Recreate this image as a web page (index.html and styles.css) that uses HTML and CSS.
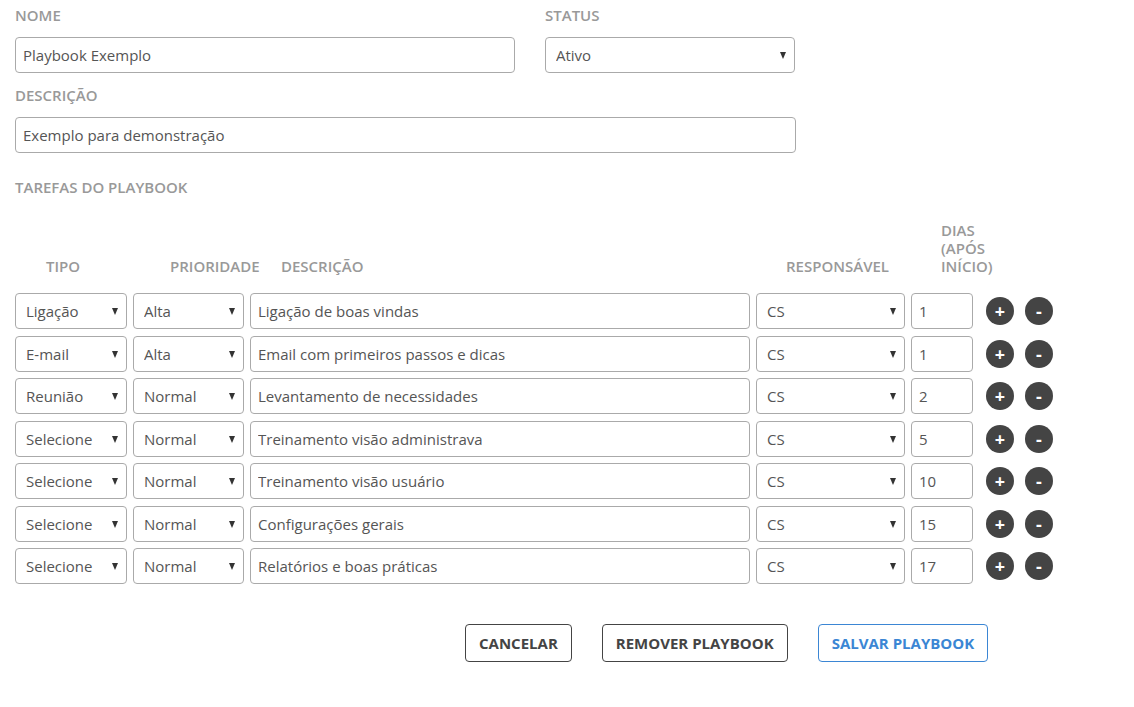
FILE: index.html
```html
<!DOCTYPE html>
<html lang="pt-BR">
<head>
    <meta charset="UTF-8">
    <title>Playbook</title>
    <link rel="stylesheet" href="styles.css">
</head>
<body>

<div class="playbook-form">
    <div class="top-row">
        <div class="field field-nome">
            <label>NOME</label>
            <input type="text" class="input" value="Playbook Exemplo">
        </div>
        <div class="field field-status">
            <label>STATUS</label>
            <div class="select-wrap">
                <select class="input"><option>Ativo</option></select>
            </div>
        </div>
    </div>
    <div class="field field-desc">
        <label>DESCRIÇÃO</label>
        <input type="text" class="input" value="Exemplo para demonstração">
    </div>

    <h3 class="section-title">TAREFAS DO PLAYBOOK</h3>

    <div class="tasks">
        <div class="task-head">
            <div class="th-tipo">TIPO</div>
            <div class="th-prio">PRIORIDADE</div>
            <div class="th-desc">DESCRIÇÃO</div>
            <div class="th-resp">RESPONSÁVEL</div>
            <div class="th-dias">DIAS<br>(APÓS<br>INÍCIO)</div>
        </div>
        <div id="task-rows"></div>
    </div>

    <div class="actions">
        <button class="btn">CANCELAR</button>
        <button class="btn">REMOVER PLAYBOOK</button>
        <button class="btn btn-primary">SALVAR PLAYBOOK</button>
    </div>
</div>

<script>
    let tasks = [
        { tipo: "Ligação", prioridade: "Alta", descricao: "Ligação de boas vindas", dias: 1 },
        { tipo: "E-mail", prioridade: "Alta", descricao: "Email com primeiros passos e dicas", dias: 1 },
        { tipo: "Reunião", prioridade: "Normal", descricao: "Levantamento de necessidades", dias: 2 },
        { tipo: "Selecione", prioridade: "Normal", descricao: "Treinamento visão administrava", dias: 5 },
        { tipo: "Selecione", prioridade: "Normal", descricao: "Treinamento visão usuário", dias: 10 },
        { tipo: "Selecione", prioridade: "Normal", descricao: "Configurações gerais", dias: 15 },
        { tipo: "Selecione", prioridade: "Normal", descricao: "Relatórios e boas práticas", dias: 17 }
    ];

    let rows = document.getElementById('task-rows');
    tasks.forEach(task => {
        let row = document.createElement('div');
        row.className = 'task-row';
        row.innerHTML = `
            <div class="select-wrap"><select class="input"><option>${task.tipo}</option></select></div>
            <div class="select-wrap"><select class="input"><option>${task.prioridade}</option></select></div>
            <input type="text" class="input" value="${task.descricao}">
            <div class="select-wrap"><select class="input"><option>CS</option></select></div>
            <input type="text" class="input" value="${task.dias}">
            <button class="round-btn add">+</button>
            <button class="round-btn remove">-</button>
        `;
        rows.appendChild(row);
    });
</script>

</body>
</html>
```

FILE: styles.css
```css
body {
    font-family: 'Open Sans', sans-serif;
    margin: 0;
    padding: 0;
    background: #fff;
    color: #555;
}

.playbook-form {
    padding: 5px 15px;
}

.field label,
.section-title {
    display: block;
    font-size: 15px;
    font-weight: 600;
    line-height: 20px;
    color: #999;
    margin: 0 0 12px;
}

.top-row {
    display: flex;
    gap: 30px;
}
.field-nome {
    width: 500px;
}
.field-status {
    width: 250px;
}
.field-desc {
    width: 781px;
    margin-top: 12px;
}

.input {
    box-sizing: border-box;
    width: 100%;
    height: 36px;
    border: 1px solid #aaa;
    border-radius: 4px;
    padding: 0 7px;
    font-family: 'Open Sans', sans-serif;
    font-size: 15px;
    color: #555;
    background: #fff;
    outline: none;
    appearance: none;
    -webkit-appearance: none;
}

.select-wrap {
    position: relative;
}
.select-wrap::after {
    content: "";
    position: absolute;
    right: 9px;
    top: 15px;
    border-left: 3.5px solid transparent;
    border-right: 3.5px solid transparent;
    border-top: 7px solid #333;
    pointer-events: none;
}
.select-wrap .input {
    padding-left: 10px;
}

.section-title {
    margin-top: 24px;
    margin-bottom: 24px;
}

.task-head,
.task-row {
    display: grid;
    grid-template-columns: 112px 111px 500px 149px 62px 28px 28px;
    column-gap: 6px;
}
.task-head {
    align-items: end;
    font-size: 15px;
    font-weight: 600;
    line-height: 18px;
    color: #999;
    white-space: nowrap;
    margin-bottom: 18px;
}
.task-head div {
    padding-left: 31px;
    text-align: left;
}
.task-head .th-prio {
    padding-left: 37px;
}
.task-head .th-resp,
.task-head .th-dias {
    padding-left: 30px;
}

.task-row {
    align-items: center;
    margin-bottom: 6.5px;
}
.task-row .add {
    margin-left: 7px;
}
.task-row .remove {
    margin-left: 12px;
}

.round-btn {
    width: 28px;
    height: 28px;
    border-radius: 50%;
    border: none;
    background: #444;
    color: #fff;
    font-family: 'Open Sans', sans-serif;
    font-size: 18px;
    font-weight: 700;
    line-height: 28px;
    padding: 0;
    cursor: pointer;
}

.actions {
    display: flex;
    gap: 30px;
    margin: 40px 0 0 450px;
}
.btn {
    height: 38px;
    padding: 0 13px;
    background: #fff;
    border: 1px solid #444;
    border-radius: 4px;
    font-family: 'Open Sans', sans-serif;
    font-size: 15px;
    font-weight: 700;
    color: #444;
    cursor: pointer;
}
.btn-primary {
    border-color: #3b86d4;
    color: #3b86d4;
}
```
